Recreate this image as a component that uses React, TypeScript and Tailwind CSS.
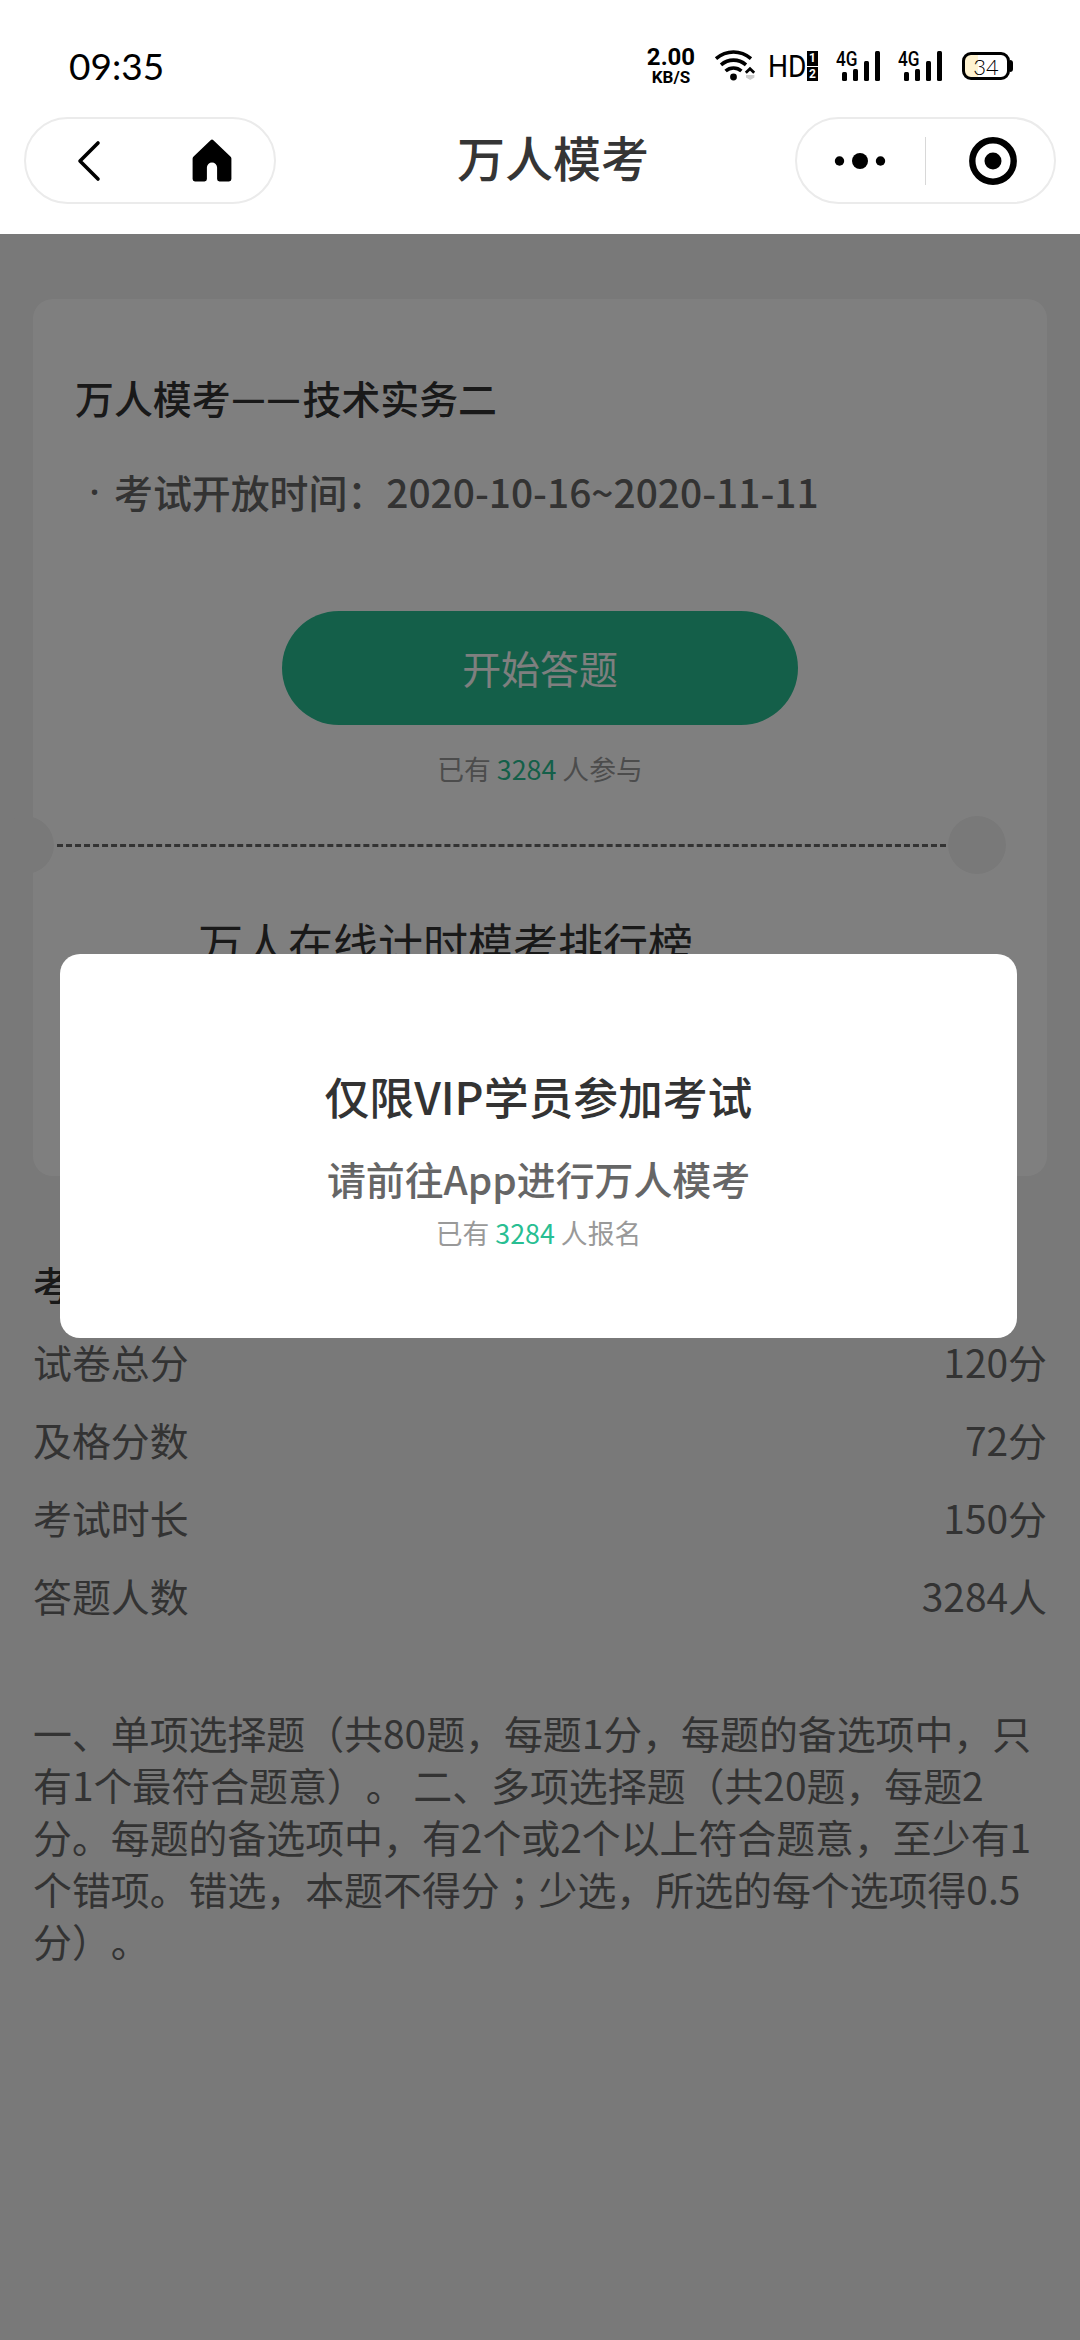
import clsx from 'clsx'

interface InfoRow {
    label: string
    value: string
}

const examInfo: InfoRow[] = [
    { label: '试卷总分', value: '120分' },
    { label: '及格分数', value: '72分' },
    { label: '考试时长', value: '150分' },
    { label: '答题人数', value: '3284人' },
]

function WifiIcon() {
    return (
        <svg width="42" height="32" viewBox="0 0 42 32" fill="none" stroke="#000" strokeWidth="3.6">
            <path d="M2 8.6C12.5 -0.2 26.5 -0.2 37 8.6" />
            <path d="M7 14.8C14.5 8.6 24.5 8.6 32 14.8" />
            <path d="M11.6 21C16.2 17 22.8 17 27.4 21" />
            <circle cx="19.5" cy="27" r="3.4" fill="#000" stroke="none" />
            <path d="M31.8 22.8L36 18.8L40.2 22.8" strokeWidth="2.8" />
            <path d="M32 25h8.4v2.6L36.2 30L32 27.6z" fill="#ccc" stroke="none" />
        </svg>
    )
}

function Signal({ className }: { className?: string }) {
    return (
        <div className={clsx('relative h-[30px] w-[45px]', className)}>
            <span className="absolute -top-[2px] left-0 origin-left scale-x-[0.86] font-['Roboto'] text-[20px] leading-[20px] font-medium">4G</span>
            <svg className="absolute top-0 left-0" width="45" height="30" viewBox="0 0 45 30">
                <rect x="6" y="21" width="5" height="9" rx="1.5" />
                <rect x="17" y="18" width="5" height="12" rx="1.5" />
                <rect x="28" y="10" width="5" height="20" rx="1.5" />
                <rect x="39" y="0" width="5" height="30" rx="1.5" />
            </svg>
        </div>
    )
}

function StatusBar() {
    return (
        <div className="flex h-[117px] items-start pl-[69px] text-black">
            <span className="mt-[43px] w-[120px] font-['Lato'] text-[37px] leading-[45px]">09:35</span>
            <div className="mt-[47px] ml-[457px] flex w-[50px] flex-col items-center font-['Roboto'] font-bold">
                <span className="text-[24px] leading-[21px]">2.00</span>
                <span className="text-[17px] leading-[18px]">KB/S</span>
            </div>
            <div className="mt-[50px] ml-[18px]">
                <WifiIcon />
            </div>
            <span className="mt-[48px] ml-[12px] w-[39px] origin-left scale-x-[0.88] font-['Roboto'] text-[32px] leading-[36px]">HD</span>
            <div className="mt-[51px] flex w-[11px] flex-col gap-px font-['Roboto'] text-[12px] font-bold text-white">
                <span className="h-[15px] bg-black text-center leading-[15px]">1</span>
                <span className="h-[14px] bg-black text-center leading-[14px]">2</span>
            </div>
            <Signal className="mt-[51px] ml-[18px]" />
            <Signal className="mt-[51px] ml-[17px]" />
            <div className="mt-[52px] ml-[19px] flex items-center">
                <div className="flex h-[28px] w-[48px] items-center justify-center rounded-[9px] border-[3px] border-black bg-linear-to-r from-[#fff3d0] from-30% to-white to-30% font-['Lato'] text-[22px] font-light">
                    34
                </div>
                <div className="h-[12px] w-[3px] rounded-r-sm bg-black" />
            </div>
        </div>
    )
}

function NavBar() {
    return (
        <div className="flex h-[117px] items-start">
            <div className="ml-[24px] flex h-[87px] w-[252px] items-center rounded-full border-2 border-[#ebebeb]">
                <svg className="ml-[51px]" width="24" height="42" viewBox="0 0 24 42" fill="none" stroke="#000" strokeWidth="3.6" strokeLinecap="round" strokeLinejoin="round">
                    <path d="M21 3L3 21L21 39" />
                </svg>
                <svg className="ml-[91px]" width="40" height="43" viewBox="0 0 40 43">
                    <path d="M18.6 1.2a2 2 0 0 1 2.8 0L38.4 17.4a3 3 0 0 1 1 2.2V40a2.4 2.4 0 0 1-2.4 2.4H27.5a2.4 2.4 0 0 1-2.4-2.4V28.5a5.1 5.1 0 0 0-10.2 0V40a2.4 2.4 0 0 1-2.4 2.4H3A2.4 2.4 0 0 1 .6 40V19.6a3 3 0 0 1 1-2.2z" />
                </svg>
            </div>
            <h1 className="mt-[8px] ml-[181px] w-[338px] text-[48px] leading-[62px] font-medium text-[#353535]">万人模考</h1>
            <div className="flex h-[87px] w-[261px] items-center rounded-full border-2 border-[#ebebeb]">
                <svg className="ml-[37px]" width="52" height="18" viewBox="0 0 52 18">
                    <circle cx="5.5" cy="9" r="4.7" />
                    <circle cx="26" cy="9" r="8" />
                    <circle cx="46.5" cy="9" r="4.7" />
                </svg>
                <div className="ml-[39px] h-[48px] w-px bg-[#d8d8d8]" />
                <svg className="ml-[43px]" width="48" height="48" viewBox="0 0 48 48">
                    <circle cx="24" cy="24" r="20.7" fill="none" stroke="#000" strokeWidth="6.4" />
                    <circle cx="24" cy="24" r="8.5" />
                </svg>
            </div>
        </div>
    )
}

function Count({ suffix, className }: { suffix: string; className?: string }) {
    return (
        <p className={clsx('text-center text-[26.8px] leading-[38px] text-[#999]', className)}>
            已有 <span className="text-[#28be92]">3284</span> {suffix}
        </p>
    )
}

function ExamCard() {
    return (
        <div className="mx-[33px] h-[877px] rounded-[20px] bg-white pt-[72px]">
            <h2 className="flex pl-[42px] text-[38.9px] leading-[52px] font-medium text-[#333]">
                <span>万人模考</span>
                <span className="flex w-[35px] scale-x-[0.86] justify-center font-['Noto_Sans']">—</span>
                <span className="mr-[2px] flex w-[35px] scale-x-[0.86] justify-center font-['Noto_Sans']">—</span>
                <span>技术实务二</span>
            </h2>
            <p className="mt-[42px] flex pl-[42px] text-[38.9px] leading-[52px] font-medium text-[#666]">
                <span className="w-[39px] text-center font-['Noto_Sans']">·</span>
                <span>考试开放时间：2020-10-16~2020-11-11</span>
            </p>
            <button className="mx-auto mt-[94px] block h-[114px] w-[516px] rounded-full bg-[#28be92] pb-[2px] text-[38.9px] text-white">开始答题</button>
            <Count suffix="人参与" className="mt-[25px]" />
            <div className="mt-[28px] -ml-[37px] flex items-center">
                <div className="h-[58px] w-[58px] shrink-0 rounded-full bg-[#f2f2f2]" />
                <div className="ml-[3px] w-[889px] border-t-[3px] border-dashed border-[#666]" />
                <div className="ml-[2px] h-[58px] w-[58px] shrink-0 rounded-full bg-[#f2f2f2]" />
            </div>
            <h2 className="mt-[39px] pl-[165px] text-[45px] leading-[60px] text-[#333]">万人在线计时模考排行榜</h2>
        </div>
    )
}

function VipDialog() {
    return (
        <div className="absolute inset-0 bg-black/50 pt-[720px]">
            <div className="ml-[60px] h-[384px] w-[957px] rounded-[20px] bg-white pt-[112px] text-center">
                <h3 className="text-[44.8px] leading-[60px] font-medium text-[#333]">仅限VIP学员参加考试</h3>
                <p className="mt-[26px] text-[38.9px] leading-[52px] font-medium text-[#666]">请前往App进行万人模考</p>
                <Count suffix="人报名" className="mt-[10px]" />
            </div>
        </div>
    )
}

export default function App() {
    return (
        <div className="flex h-[2340px] w-[1080px] flex-col overflow-hidden bg-white font-['Noto_Sans_CJK_SC',sans-serif] [text-spacing-trim:space-all]">
            <header className="h-[234px]">
                <StatusBar />
                <NavBar />
            </header>

            <main className="relative flex-1 bg-[#f2f2f2] pt-[65px]">
                <ExamCard />

                <section className="px-[33px] pt-[68px] text-[38.9px] text-[#666]">
                    <h2 className="leading-[78px] font-medium text-[#333]">考</h2>
                    {examInfo.map(row => (
                        <div key={row.label} className="flex justify-between leading-[78px]">
                            <span>{row.label}</span>
                            <span>{row.value}</span>
                        </div>
                    ))}
                    <p className="mt-[72px] leading-[52px]">
                        一、单项选择题（共80题，每题1分，每题的备选项中，只有1个最符合题意）。 二、多项选择题（共20题，每题2分。每题的备选项中，有2个或2个以上符合题意，至少有1个错项。错选，本题不得分<span className="font-['Noto_Sans_CJK_JP']">；</span>少选，所选的每个选项得0.5分）。
                    </p>
                </section>

                <VipDialog />
            </main>
        </div>
    )
}
